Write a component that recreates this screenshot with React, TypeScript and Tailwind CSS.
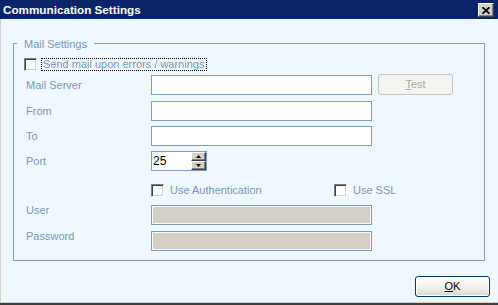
import React from "react";

const LBL = "text-[#7a97b7]";

function CheckBox() {
  return (
    <span className="inline-block w-[13px] h-[13px] shrink-0 bg-white border border-t-[#808080] border-l-[#808080] border-r-white border-b-white shadow-[inset_1px_1px_0_#404040,inset_-1px_-1px_0_#d4d0c8]" />
  );
}

function SpinBtn({ up }: { up?: boolean }) {
  return (
    <div className="w-[15px] h-[9px] bg-[#d4d0c8] border border-t-white border-l-white border-r-[#404040] border-b-[#404040] shadow-[inset_-1px_-1px_0_#808080] flex items-center justify-center">
      <svg width="5" height="3" viewBox="0 0 5 3">
        {up ? <path d="M2.5 0L5 3H0z" fill="#000" /> : <path d="M0 0H5L2.5 3z" fill="#000" />}
      </svg>
    </div>
  );
}

function TextRow({ label, disabled, top }: { label: string; disabled?: boolean; top?: boolean }) {
  return (
    <div className="flex items-start pl-[12px] h-[20px]">
      <span className={`w-[125px] ${top ? "leading-[11px]" : "leading-[20px]"} ${LBL}`}>{label}</span>
      <input
        readOnly
        disabled={disabled}
        className={`w-[221px] h-[20px] border border-[#7f9db9] outline-none ${
          disabled ? "bg-[#d4d0c8] shadow-[inset_0_0_0_1px_#ffffff]" : "bg-white"
        }`}
      />
    </div>
  );
}

export default function App() {
  return (
    <div
      className="w-[498px] h-[305px] flex flex-col overflow-hidden text-[11px]"
      style={{ fontFamily: '"Liberation Sans", Arial, sans-serif' }}
    >
      {/* Title bar */}
      <div className="h-[19px] shrink-0 bg-[#0a246a] flex items-start justify-between pl-[3px] pr-[4px]">
        <span className="text-white font-bold text-[11.7px] leading-[19px]">Communication Settings</span>
        <div className="mt-[3px] w-[16px] h-[14px] bg-[#d4d0c8] border border-t-white border-l-white border-r-[#404040] border-b-[#404040] shadow-[inset_-1px_-1px_0_#808080] flex items-center justify-center">
          <svg width="8" height="7" viewBox="0 0 8 7">
            <path d="M0.5 0.3L7.5 6.7M7.5 0.3L0.5 6.7" stroke="#000" strokeWidth="1.8" />
          </svg>
        </div>
      </div>

      {/* Body */}
      <div className="flex-1 bg-[#eff7ff] border-l border-l-[#d4d0c8] border-b border-b-[#d4d0c8] flex flex-col">
        <div className="mt-[24px] ml-[12px] w-[472px] border border-[#7f9db9] flex flex-col pb-[9px]">
          <div className={`self-start -mt-[6px] ml-[3px] px-[7px] bg-[#eff7ff] leading-[13px] ${LBL}`}>Mail Settings</div>

          <div className="mt-[7px] pl-[10px] flex items-center h-[13px]">
            <CheckBox />
            <span className={`ml-[4px] h-[13px] pl-[1px] pr-[2px] border border-dotted border-black leading-[11px] ${LBL}`}>
              Send mail upon errors / warnings
            </span>
          </div>

          <div className="mt-[3px] flex items-start pl-[12px] h-[21px]">
            <span className={`w-[125px] mt-[1px] leading-[20px] ${LBL}`}>Mail Server</span>
            <input readOnly className="mt-[1px] w-[221px] h-[20px] border border-[#7f9db9] bg-white outline-none" />
            <button className="ml-[6px] w-[75px] h-[21px] rounded-[3px] border border-[#c5c5bd] bg-[#f4f4f0] text-[#aca899] leading-[19px]">
              <span className="underline">T</span>est
            </button>
          </div>

          <div className="mt-[6px]">
            <TextRow label="From" />
          </div>
          <div className="mt-[5px]">
            <TextRow label="To" />
          </div>

          <div className="mt-[5px] flex items-start pl-[12px] h-[20px]">
            <span className={`w-[125px] leading-[20px] ${LBL}`}>Port</span>
            <div className="w-[56px] h-[20px] border border-[#7f9db9] bg-white flex">
              <span className="flex-1 pl-[1px] leading-[18px] text-black text-[12px]">25</span>
              <div className="flex flex-col">
                <SpinBtn up />
                <SpinBtn />
              </div>
            </div>
          </div>

          <div className="mt-[13px] pl-[137px] flex items-center h-[13px]">
            <div className="w-[183px] flex items-center">
              <CheckBox />
              <span className={`ml-[6px] leading-[13px] ${LBL}`}>Use Authentication</span>
            </div>
            <CheckBox />
            <span className={`ml-[6px] leading-[13px] ${LBL}`}>Use SSL</span>
          </div>

          <div className="mt-[8px]">
            <TextRow label="User" disabled top />
          </div>
          <div className="mt-[6px]">
            <TextRow label="Password" disabled top />
          </div>
        </div>

        <div className="mt-[15px] self-end mr-[8px]">
          <button className="w-[75px] h-[21px] rounded-[3px] border border-[#003c74] bg-linear-to-b from-white via-[#f3f3ee] to-[#d8d7ce] text-black leading-[19px] shadow-[inset_0_0_0_1px_#ffffff]">
            <span className="underline">O</span>K
          </button>
        </div>
      </div>
      <div className="h-[2px] shrink-0 bg-[#404040]" />
    </div>
  );
}
